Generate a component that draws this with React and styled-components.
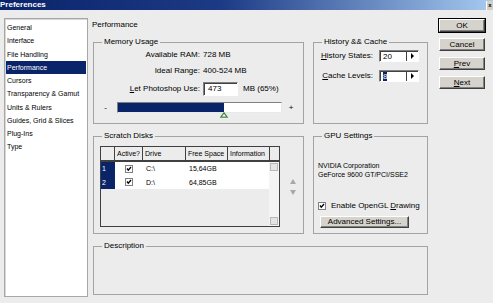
import React from "react";
import styled, { createGlobalStyle } from "styled-components";

const sections = [
  "General",
  "Interface",
  "File Handling",
  "Performance",
  "Cursors",
  "Transparency & Gamut",
  "Units & Rulers",
  "Guides, Grid & Slices",
  "Plug-Ins",
  "Type",
];

const disks = [
  { id: 1, drive: "C:\\", free: "15,64GB" },
  { id: 2, drive: "D:\\", free: "64,85GB" },
];

const memory = { available: 728, use: 473 };

const GlobalStyle = createGlobalStyle`
  html, body { margin: 0; padding: 0; }
  body {
    width: 493px;
    height: 303px;
    overflow: hidden;
    background: #ececec;
    font-family: "Liberation Sans", Arial, sans-serif;
    font-size: 8px;
    color: #000;
  }
`;

const Window = styled.div`
  width: 493px;
  height: 303px;
  display: flex;
  flex-direction: column;
  overflow: hidden;
`;

const TitleBar = styled.div`
  flex: none;
  height: 10px;
  display: flex;
  align-items: center;
  justify-content: space-between;
  background: linear-gradient(to right, #0a246a 0%, #1d3a86 45%, #a6caf0 100%);
  color: #fff;
  font-weight: bold;
  font-size: 8px;
  line-height: 10px;
`;

const CloseBox = styled.div`
  width: 7px;
  height: 9px;
  box-sizing: border-box;
  background: #d4d0c8;
  border-left: 1px solid #fff;
  color: #000;
  font-size: 6px;
  font-weight: bold;
  line-height: 9px;
  text-align: center;
`;

const Body = styled.div`
  flex: 1;
  display: flex;
  padding: 8px 8px 0 4px;
`;

const SectionList = styled.ul`
  list-style: none;
  margin: 0;
  padding: 2px 1px;
  width: 84px;
  height: 279px;
  box-sizing: border-box;
  background: #fff;
  border: 1px solid #a7a7a7;
  box-shadow: inset 1px 1px 0 #d8d8d8;
`;

const SectionItem = styled.li`
  height: 13.25px;
  line-height: 13.25px;
  padding-left: 1px;
  font-size: 7px;
  white-space: nowrap;
  background: ${(p) => (p.$active ? "#0a246a" : "transparent")};
  color: ${(p) => (p.$active ? "#fff" : "#000")};
`;

const Main = styled.div`
  width: 335px;
  margin-left: 5px;
  display: flex;
  flex-direction: column;
`;

const Heading = styled.div`
  margin: 2px 0 0 -1px;
  height: 10px;
  line-height: 10px;
`;

const Panels = styled.div`
  margin-top: 7px;
  display: grid;
  grid-template-columns: 211px 115px;
  grid-template-rows: 87px 103px 54px;
  column-gap: 9px;
  row-gap: 7px;
`;

const Group = styled.fieldset`
  margin: 0;
  padding: 0;
  min-width: 0;
  border: 1px solid #a3a3a3;
  grid-column: ${(p) => (p.$wide ? "1 / -1" : "auto")};
`;

const Legend = styled.legend`
  margin-left: 8px;
  padding: 0 2px;
  line-height: 10px;
  font-size: 8px;
`;

const InfoGrid = styled.div`
  margin-top: 3px;
  display: grid;
  grid-template-columns: ${(p) => p.$cols};
  column-gap: ${(p) => p.$gap};
  row-gap: ${(p) => p.$rowGap};
  align-items: center;
`;

const Label = styled.div`
  text-align: right;
  line-height: 10px;
  white-space: nowrap;
`;

const Value = styled.div`
  display: flex;
  align-items: center;
  line-height: 10px;
  white-space: nowrap;
`;

const TextBox = styled.div`
  width: 35px;
  height: 14px;
  box-sizing: border-box;
  margin-right: 5px;
  padding-left: 4px;
  background: #fff;
  border: 1px solid;
  border-color: #808080 #fff #fff #808080;
  box-shadow: inset 1px 1px 0 #404040;
  line-height: 12px;
`;

const SliderRow = styled.div`
  margin-top: 6px;
  display: grid;
  grid-template-columns: 23px 165px 18px;
  align-items: center;
  text-align: center;
`;

const Track = styled.div`
  position: relative;
  height: 11px;
  box-sizing: border-box;
  background: #fff;
  border: 1px solid;
  border-color: #808080 #e8e8e8 #e8e8e8 #808080;
`;

const TrackFill = styled.div`
  height: 100%;
  background: #0a246a;
`;

const Thumb = styled.svg`
  position: absolute;
  top: 100%;
  margin-left: -4px;
`;

const Spin = styled.div`
  width: 40px;
  height: 12px;
  box-sizing: border-box;
  display: flex;
  background: #fff;
  border: 1px solid;
  border-color: #808080 #fff #fff #808080;
  box-shadow: inset 1px 1px 0 #404040;
`;

const SpinValue = styled.div`
  flex: 1;
  padding: 1px 0 0 3px;
  line-height: 9px;
  span {
    background: ${(p) => (p.$selected ? "#0a246a" : "transparent")};
    color: ${(p) => (p.$selected ? "#fff" : "#000")};
  }
`;

const SpinArrow = styled.div`
  width: 11px;
  display: flex;
  align-items: center;
  justify-content: center;
  border-left: 1px solid #404040;
  &::after {
    content: "";
    border-left: 3px solid #000;
    border-top: 3px solid transparent;
    border-bottom: 3px solid transparent;
  }
`;

const DiskArea = styled.div`
  display: flex;
  align-items: center;
  margin: 5px 0 0 6px;
`;

const DiskTable = styled.div`
  width: 180px;
  height: 81px;
  box-sizing: border-box;
  display: flex;
  flex-direction: column;
  border: 1px solid #404040;
  background: #ececec;
  font-size: 7px;
`;

const HeaderRow = styled.div`
  display: grid;
  grid-template-columns: 14px 28px 43px 42px 42px 1fr;
  height: 13px;
  border-bottom: 2px solid #404040;
`;

const HeaderCell = styled.div`
  padding-left: 2px;
  line-height: 13px;
  white-space: nowrap;
  border-right: ${(p) => (p.$last ? "none" : "1px solid #404040")};
`;

const DataArea = styled.div`
  flex: 1;
  display: flex;
`;

const Rows = styled.div`
  flex: 1;
`;

const DataRow = styled.div`
  display: grid;
  grid-template-columns: 14px 28px 43px 42px 1fr;
  height: 13.5px;
  line-height: 13.5px;
  background: #fff;
`;

const IndexCell = styled.div`
  background: #0a246a;
  color: #fff;
  padding-left: 1px;
`;

const CheckCell = styled.div`
  display: flex;
  align-items: center;
  justify-content: center;
`;

const Cell = styled.div`
  padding-left: 3px;
`;

const Scrollbar = styled.div`
  width: 10px;
  display: flex;
  flex-direction: column;
  justify-content: space-between;
  padding: 1px 0;
  box-sizing: border-box;
  background: #f4f4f4;
`;

const ScrollButton = styled.div`
  width: 8px;
  height: 8px;
  margin: 0 1px;
  box-sizing: border-box;
  border: 1px solid #b8b8b8;
  background: #e4e4e4;
`;

const Movers = styled.div`
  display: flex;
  flex-direction: column;
  gap: 6px;
  margin-left: 10px;
`;

const Mover = styled.div`
  width: 0;
  height: 0;
  border-left: 3px solid transparent;
  border-right: 3px solid transparent;
  border-${(p) => (p.$up ? "bottom" : "top")}: 5px solid #a8a8a8;
`;

const GpuInfo = styled.div`
  margin: 20px 0 0 4px;
  font-size: 7px;
  line-height: 9px;
`;

const CheckLine = styled.label`
  display: flex;
  align-items: center;
  gap: 5px;
  margin: 22px 0 0 4px;
  line-height: 10px;
`;

const ButtonColumn = styled.div`
  width: 46px;
  margin: 1px 0 0 11px;
  display: flex;
  flex-direction: column;
  gap: 6px;
`;

const Button = styled.button`
  width: ${(p) => p.$width || "46px"};
  height: ${(p) => p.$height || "13px"};
  margin: ${(p) => p.$margin || "0"};
  padding: 0;
  box-sizing: border-box;
  font-family: inherit;
  font-size: 8px;
  line-height: 10px;
  color: #000;
  background: #d6d3cd;
  border: 1px solid;
  border-color: #fff #404040 #404040 #fff;
  box-shadow: ${(p) =>
    p.$primary
      ? "0 0 0 1px #000, inset -1px -1px 0 #808080"
      : "inset -1px -1px 0 #808080"};
`;

const CheckBox = () => (
  <svg width="8" height="8" viewBox="0 0 8 8">
    <rect x="0.5" y="0.5" width="7" height="7" fill="#fff" stroke="#808080" />
    <path d="M2 3.5 L3.3 5.2 L6 2" fill="none" stroke="#000" strokeWidth="1.3" />
  </svg>
);

export default function App() {
  const pct = Math.round((memory.use / memory.available) * 100);

  return (
    <>
      <GlobalStyle />
      <Window>
        <TitleBar>
          <span>Preferences</span>
          <CloseBox>x</CloseBox>
        </TitleBar>
        <Body>
          <SectionList>
            {sections.map((s) => (
              <SectionItem key={s} $active={s === "Performance"}>
                {s}
              </SectionItem>
            ))}
          </SectionList>

          <Main>
            <Heading>Performance</Heading>
            <Panels>
              <Group>
                <Legend>Memory Usage</Legend>
                <InfoGrid $cols="106px auto" $gap="3px" $rowGap="6px">
                  <Label>Available RAM:</Label>
                  <Value>{memory.available} MB</Value>
                  <Label>Ideal Range:</Label>
                  <Value>400-524 MB</Value>
                  <Label>
                    <u>L</u>et Photoshop Use:
                  </Label>
                  <Value>
                    <TextBox>{memory.use}</TextBox>
                    MB ({pct}%)
                  </Value>
                </InfoGrid>
                <SliderRow>
                  <span>-</span>
                  <Track>
                    <TrackFill style={{ width: `${pct}%` }} />
                    <Thumb width="8" height="6" viewBox="0 0 8 6" style={{ left: `${pct}%` }}>
                      <path d="M4 0.8 L7.2 5.2 L0.8 5.2 Z" fill="#fff" stroke="#3c8a3c" strokeWidth="1.2" />
                    </Thumb>
                  </Track>
                  <span>+</span>
                </SliderRow>
              </Group>

              <Group>
                <Legend>History &amp;&amp; Cache</Legend>
                <InfoGrid $cols="59px 40px" $gap="6px" $rowGap="8px">
                  <Label>
                    <u>H</u>istory States:
                  </Label>
                  <Spin>
                    <SpinValue>
                      <span>20</span>
                    </SpinValue>
                    <SpinArrow />
                  </Spin>
                  <Label>
                    <u>C</u>ache Levels:
                  </Label>
                  <Spin>
                    <SpinValue $selected>
                      <span>8</span>
                    </SpinValue>
                    <SpinArrow />
                  </Spin>
                </InfoGrid>
              </Group>

              <Group>
                <Legend>Scratch Disks</Legend>
                <DiskArea>
                  <DiskTable>
                    <HeaderRow>
                      <HeaderCell />
                      <HeaderCell>Active?</HeaderCell>
                      <HeaderCell>Drive</HeaderCell>
                      <HeaderCell>Free Space</HeaderCell>
                      <HeaderCell>Information</HeaderCell>
                      <HeaderCell $last />
                    </HeaderRow>
                    <DataArea>
                      <Rows>
                        {disks.map((d) => (
                          <DataRow key={d.id}>
                            <IndexCell>{d.id}</IndexCell>
                            <CheckCell>
                              <CheckBox />
                            </CheckCell>
                            <Cell>{d.drive}</Cell>
                            <Cell>{d.free}</Cell>
                            <Cell />
                          </DataRow>
                        ))}
                      </Rows>
                      <Scrollbar>
                        <ScrollButton />
                        <ScrollButton />
                      </Scrollbar>
                    </DataArea>
                  </DiskTable>
                  <Movers>
                    <Mover $up />
                    <Mover />
                  </Movers>
                </DiskArea>
              </Group>

              <Group>
                <Legend>GPU Settings</Legend>
                <GpuInfo>
                  NVIDIA Corporation
                  <br />
                  GeForce 9600 GT/PCI/SSE2
                </GpuInfo>
                <CheckLine>
                  <CheckBox />
                  <span>
                    Enable OpenGL <u>D</u>rawing
                  </span>
                </CheckLine>
                <Button $width="89px" $height="12px" $margin="5px 0 0 6px">
                  Advanced Settings...
                </Button>
              </Group>

              <Group $wide>
                <Legend>Description</Legend>
              </Group>
            </Panels>
          </Main>

          <ButtonColumn>
            <Button $primary>OK</Button>
            <Button>Cancel</Button>
            <Button>
              <u>P</u>rev
            </Button>
            <Button>
              <u>N</u>ext
            </Button>
          </ButtonColumn>
        </Body>
      </Window>
    </>
  );
}
